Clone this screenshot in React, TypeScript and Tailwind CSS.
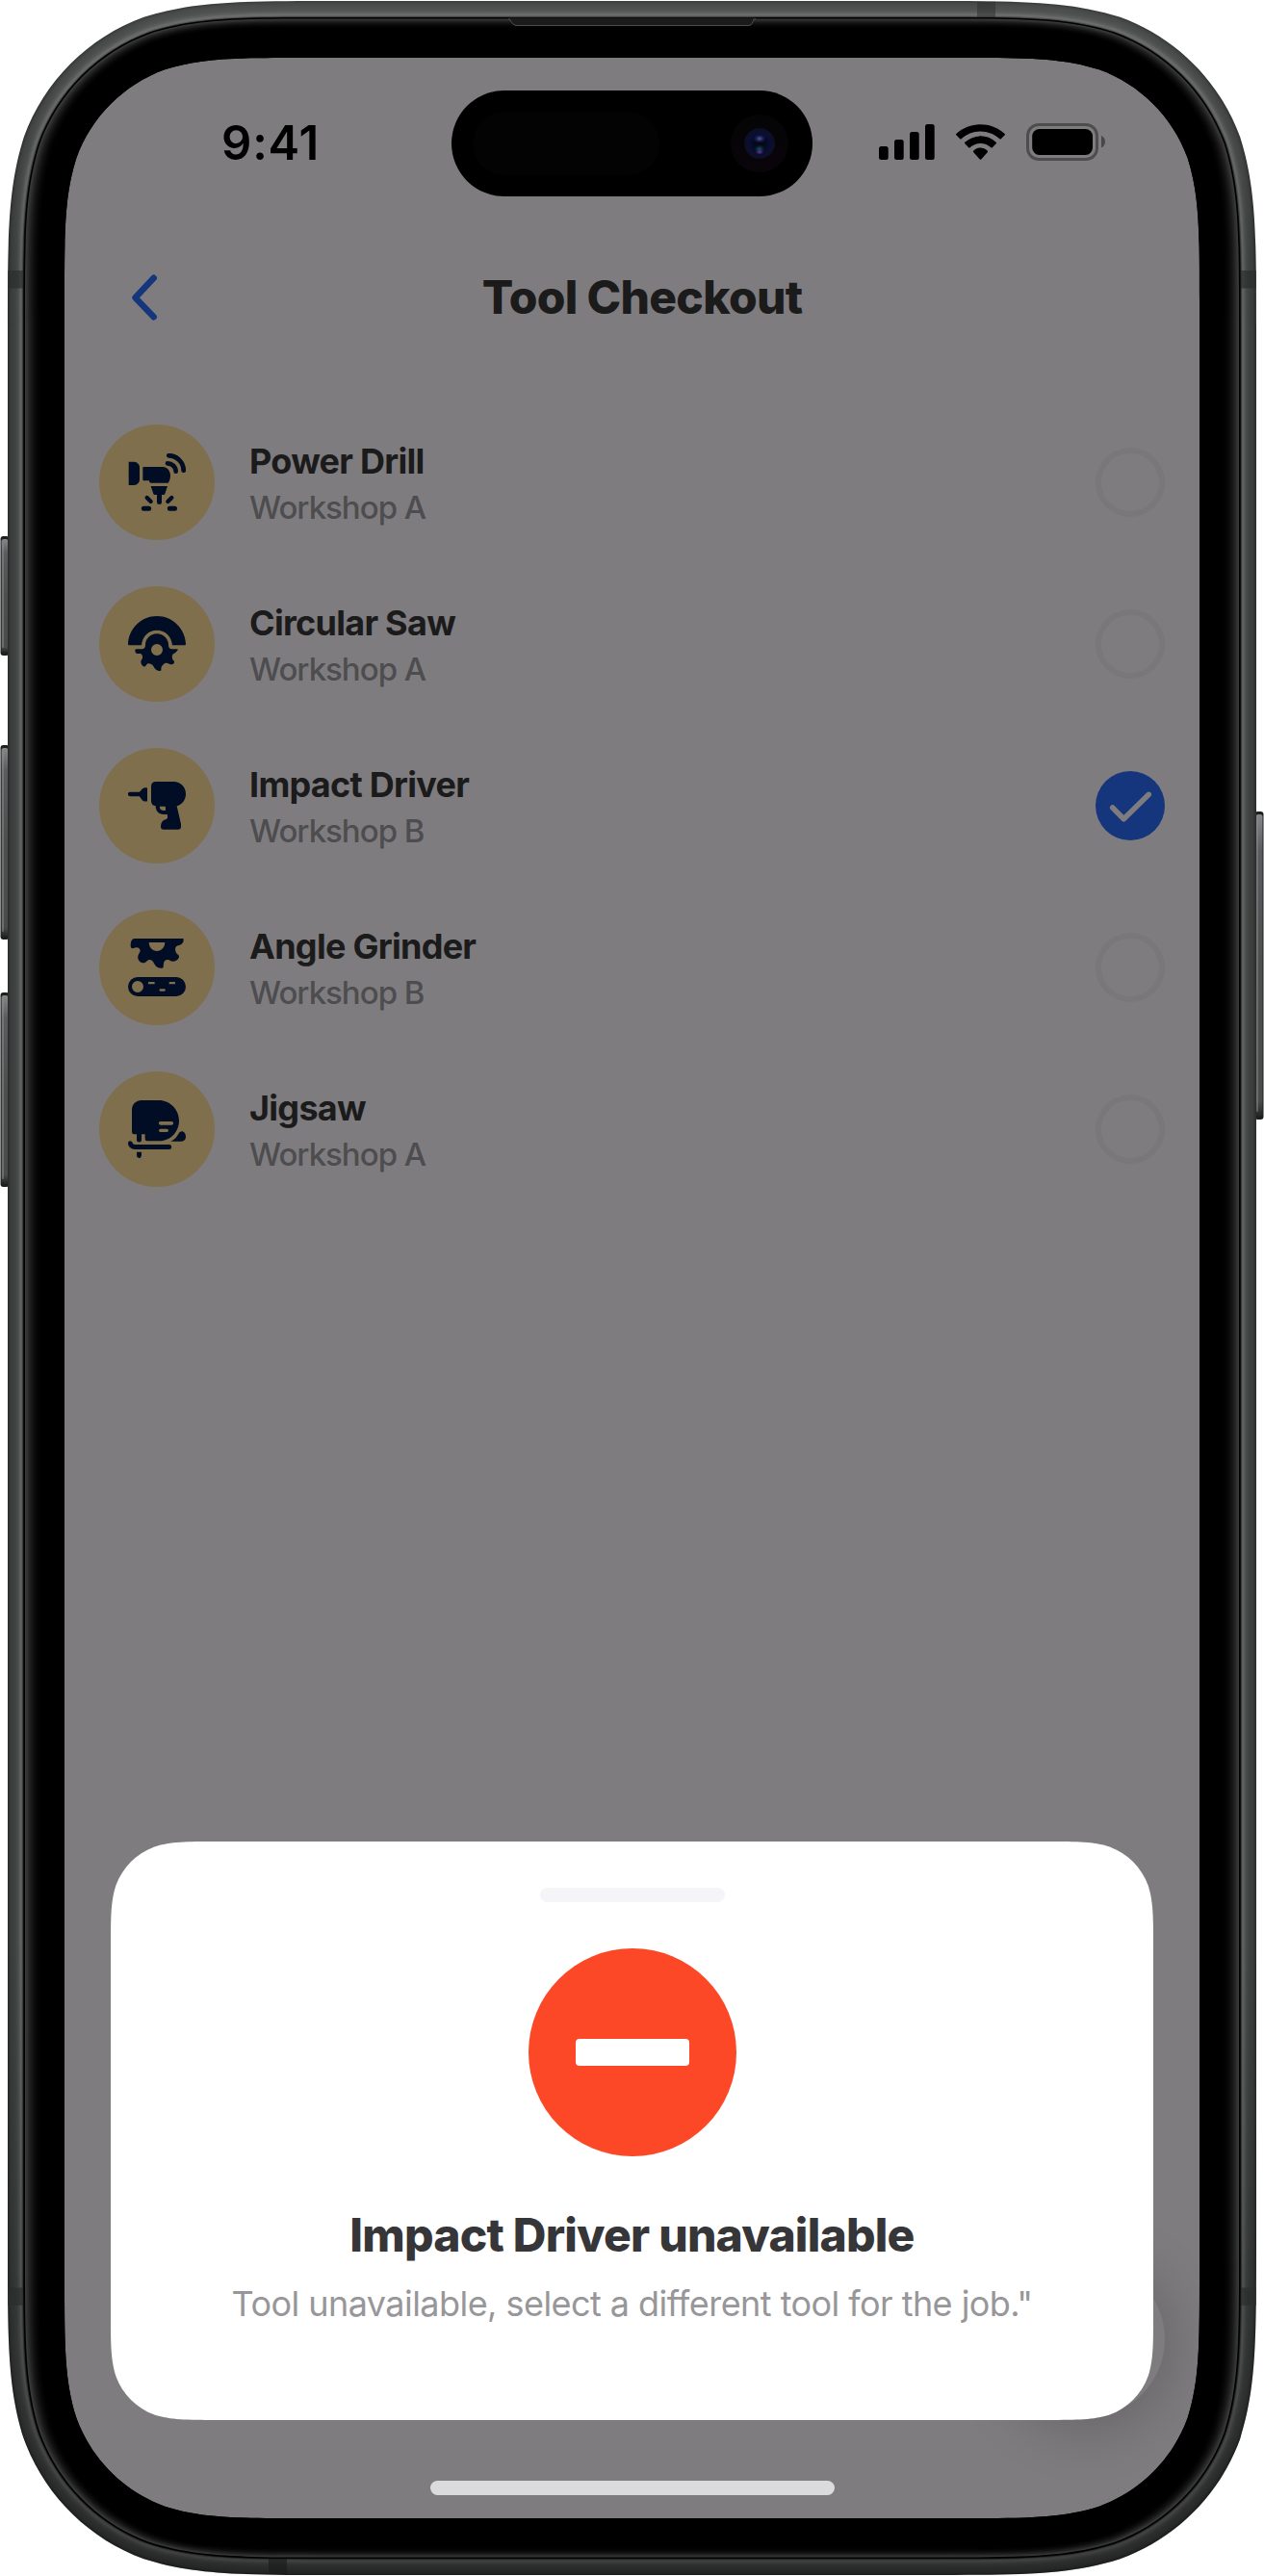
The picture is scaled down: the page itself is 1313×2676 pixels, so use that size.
import type { ReactNode } from "react";

/* Rounded rectangle with continuous (superellipse-like) corners. */
function squircle(x: number, y: number, w: number, h: number, r: number): string {
  const a = 1.52866483 * r;
  const b = 1.08849296 * r;
  const c = 0.86840694 * r;
  const d = 0.63149379 * r;
  const e = 0.37282383 * r;
  const f = 0.16905956 * r;
  const g = 0.07491139 * r;
  const R = x + w;
  const B = y + h;
  return [
    `M${x + a} ${y}H${R - a}`,
    `C${R - b} ${y} ${R - c} ${y} ${R - d} ${y + g}`,
    `C${R - e} ${y + f} ${R - f} ${y + e} ${R - g} ${y + d}`,
    `C${R} ${y + c} ${R} ${y + b} ${R} ${y + a}V${B - a}`,
    `C${R} ${B - b} ${R} ${B - c} ${R - g} ${B - d}`,
    `C${R - f} ${B - e} ${R - e} ${B - f} ${R - d} ${B - g}`,
    `C${R - c} ${B} ${R - b} ${B} ${R - a} ${B}H${x + a}`,
    `C${x + b} ${B} ${x + c} ${B} ${x + d} ${B - g}`,
    `C${x + e} ${B - f} ${x + f} ${B - e} ${x + g} ${B - d}`,
    `C${x} ${B - c} ${x} ${B - b} ${x} ${B - a}V${y + a}`,
    `C${x} ${y + b} ${x} ${y + c} ${x + g} ${y + d}`,
    `C${x + f} ${y + e} ${x + e} ${y + f} ${x + d} ${y + g}`,
    `C${x + c} ${y} ${x + b} ${y} ${x + a} ${y}Z`,
  ].join("");
}

const METAL = [44, 50, 56, 59, 61, 63, 64, 66, 68, 71, 76, 82, 90, 98, 92, 60, 28];
const GLOW = [58, 53, 47, 41, 35, 30, 25, 21, 17, 14, 11, 8, 6, 4, 3, 2];
/* The screen opening, and a slightly larger one that keeps the rim layers clear of its edge. */
const HOLE = squircle(67, 60, 1179, 2556, 165);
const RIM_HOLE = squircle(55, 50, 1203, 2576, 175);

function SideButton({ x, y, h }: { x: number; y: number; h: number }) {
  return (
    <g>
      <rect x={x} y={y} width="9" height={h} rx="3" fill="#1d1f1f" />
      <rect x={x + 1} y={y + 3} width="7" height={h - 6} rx="2.5" fill="url(#button)" />
      <rect x={x + 1.5} y={y + 6} width="2" height={h - 14} rx="1" fill="#8b8d8f" opacity="0.5" />
    </g>
  );
}

function Bezel() {
  return (
    <svg className="pointer-events-none absolute inset-0" width="1313" height="2676" viewBox="0 0 1313 2676">
      <defs>
        <linearGradient id="button" x1="0" y1="0" x2="0" y2="1">
          <stop offset="0" stopColor="#85878a" />
          <stop offset="0.12" stopColor="#5a5c5e" />
          <stop offset="0.5" stopColor="#4c4f4e" />
          <stop offset="0.95" stopColor="#4a4c4c" />
          <stop offset="1" stopColor="#222323" />
        </linearGradient>
        <linearGradient id="shade" x1="0" y1="0" x2="0" y2="1">
          <stop offset="0" stopColor="#fff" stopOpacity="0.08" />
          <stop offset="0.1" stopColor="#fff" stopOpacity="0" />
          <stop offset="0.75" stopColor="#000" stopOpacity="0" />
          <stop offset="1" stopColor="#000" stopOpacity="0.35" />
        </linearGradient>
      </defs>
      <SideButton x={0.5} y={557} h={124} />
      <SideButton x={0.5} y={774} h={202} />
      <SideButton x={0.5} y={1031} h={202} />
      <SideButton x={1303.5} y={843} h={320} />
      {METAL.map((v, i) => (
        <path
          key={i}
          fillRule="evenodd"
          fill={`rgb(${v - 1},${v + 1},${v})`}
          d={squircle(8 + i, 1 + i * 1.05, 1297 - 2 * i, 2674 - 2.1 * i, 224 - i) + RIM_HOLE}
        />
      ))}
      <path fillRule="evenodd" fill="url(#shade)" d={squircle(8, 1, 1297, 2674, 224) + RIM_HOLE} />
      <g fill="#2b2d2c">
        <rect x="8" y="281" width="16" height="18.5" opacity="0.7" />
        <rect x="1289" y="281" width="16" height="18.5" opacity="0.7" />
        <rect x="8" y="2376.500" width="16" height="18.5" opacity="0.7" />
        <rect x="1289" y="2376.500" width="16" height="18.5" opacity="0.7" />
        <rect x="1015" y="1.500" width="19" height="17" opacity="0.5" />
      </g>
      <rect x="279" y="2658" width="19" height="16" fill="#1c1d1d" opacity="0.7" />
      <path fillRule="evenodd" fill="#000" d={squircle(24.5, 18, 1264, 2640, 207) + HOLE} />
      {GLOW.map((v, i) => (
        <path
          key={i}
          fillRule="evenodd"
          fill={`rgb(${v},${v},${v})`}
          d={squircle(26 + i, 19.5 + i * 0.6, 1261 - 2 * i, 2637 - 1.2 * i, 205.5 - i * 0.8) + RIM_HOLE}
        />
      ))}
      <path fillRule="evenodd" fill="#000" d={squircle(42, 29, 1229, 2618, 192) + HOLE} />
      <path d="M528 18.500Q530 18.500 531 22T536 27H778Q781 27 782 22T785 18.500Z" fill="#1b1b1b" />
      <path d="M528 19.500Q530 19.500 531 22.500T536 26.500H778Q781 26.500 782 22.500T785 19.500" fill="none" stroke="#4b4b4b" strokeWidth="1" />
    </svg>
  );
}

function DynamicIsland() {
  return (
    <div className="flex h-[110px] w-[375px] items-center justify-between rounded-full bg-black pr-[25px] pl-[22px]">
      <div className="h-[66px] w-[194px] rounded-full bg-[#030303]" />
      <svg width="60" height="60" viewBox="0 0 60 60">
        <defs>
          <linearGradient id="lensRim" x1="0" y1="0" x2="0" y2="1">
            <stop offset="0" stopColor="#040405" />
            <stop offset="1" stopColor="#0a040b" />
          </linearGradient>
          <radialGradient id="lens" cx="0.5" cy="0.5" r="0.5">
            <stop offset="0" stopColor="#05070f" />
            <stop offset="0.55" stopColor="#060a22" />
            <stop offset="1" stopColor="#0a0f3a" />
          </radialGradient>
          <radialGradient id="glintTop">
            <stop offset="0" stopColor="#5a5ca8" />
            <stop offset="1" stopColor="#15185a" stopOpacity="0" />
          </radialGradient>
          <radialGradient id="glintBottom">
            <stop offset="0" stopColor="#155a66" />
            <stop offset="1" stopColor="#0a2a40" stopOpacity="0" />
          </radialGradient>
          <radialGradient id="glintPink">
            <stop offset="0" stopColor="#7a2a90" />
            <stop offset="1" stopColor="#7a2a90" stopOpacity="0" />
          </radialGradient>
        </defs>
        <circle cx="30" cy="30" r="30" fill="url(#lensRim)" />
        <circle cx="30" cy="30" r="16" fill="#0d0f26" />
        <circle cx="30" cy="30" r="12.500" fill="url(#lens)" />
        <ellipse cx="30" cy="25" rx="7" ry="5" fill="url(#glintTop)" />
        <ellipse cx="30" cy="36" rx="6" ry="5" fill="url(#glintBottom)" />
        <ellipse cx="30" cy="39" rx="4" ry="2.500" fill="url(#glintPink)" />
      </svg>
    </div>
  );
}

function StatusBar() {
  return (
    <div className="flex h-[176px] shrink-0 items-center pr-[98px] pl-[163px]">
      <div className="text-[49px] leading-none font-semibold tracking-[0.8px] text-black">9:41</div>
      <div className="ml-auto flex items-center gap-[22px] pb-px">
        <svg width="58" height="39" viewBox="0 0 58 39">
          <rect x="0" y="24" width="9.700" height="14" rx="2.500" />
          <rect x="16" y="17" width="9.700" height="21" rx="2.500" />
          <rect x="32" y="9" width="9.700" height="29" rx="2.500" />
          <rect x="48" y="1" width="9.700" height="37" rx="2.500" />
        </svg>
        <svg width="51" height="39" viewBox="0 -0.33 17.14 13">
          <path d="M8.571 2.466C11.058 2.466 13.45 3.388 15.253 5.042C15.389 5.17 15.606 5.168 15.739 5.038L17.037 3.775C17.105 3.709 17.142 3.62 17.142 3.527C17.141 3.435 17.102 3.346 17.034 3.281C12.303 -1.094 4.839 -1.094 0.108 3.281C0.04 3.346 0.001 3.435 0 3.527C0 3.62 0.037 3.709 0.105 3.775L1.403 5.038C1.536 5.168 1.753 5.17 1.889 5.042C3.692 3.388 6.084 2.466 8.571 2.466ZM8.568 6.687C9.925 6.686 11.234 7.198 12.24 8.122C12.376 8.253 12.591 8.251 12.723 8.116L14.011 6.797C14.078 6.728 14.116 6.634 14.115 6.536C14.114 6.439 14.075 6.346 14.006 6.278C10.942 3.387 6.197 3.387 3.133 6.278C3.064 6.346 3.024 6.439 3.023 6.536C3.023 6.634 3.06 6.728 3.128 6.797L4.415 8.116C4.548 8.251 4.762 8.253 4.898 8.122C5.903 7.199 7.211 6.687 8.568 6.687ZM11.092 9.48C11.094 9.585 11.057 9.687 10.99 9.761L8.813 12.216C8.749 12.288 8.662 12.328 8.572 12.328C8.481 12.328 8.394 12.288 8.33 12.216L6.153 9.761C6.086 9.687 6.049 9.585 6.051 9.48C6.053 9.375 6.094 9.275 6.164 9.204C7.554 7.885 9.59 7.885 10.98 9.204C11.05 9.275 11.09 9.375 11.092 9.48Z" />
        </svg>
        <svg width="82" height="39" viewBox="0 0 82 39">
          <rect x="1.500" y="1.500" width="72" height="36" rx="11.500" fill="none" stroke="#000" strokeOpacity="0.38" strokeWidth="3" />
          <rect x="6.200" y="6" width="62.800" height="27" rx="7.500" />
          <path d="M78 13V25.500C80.500 24.400 82 22 82 19.250S80.500 14.100 78 13Z" fillOpacity="0.42" />
        </svg>
      </div>
    </div>
  );
}

function Header() {
  return (
    <div className="flex h-[145px] shrink-0 items-center pr-[77px] pl-[68px]">
      <svg width="30" height="50" viewBox="0 0 30 50" fill="none" stroke="#2a6cf8" strokeWidth="6.500" strokeLinecap="round" strokeLinejoin="round">
        <path d="M24.700 4.800L5.500 25.300L24.700 45.200" />
      </svg>
      <h1 className="flex-1 text-center text-[48px] leading-none font-extrabold tracking-[-0.7px] text-[#363639]">Tool Checkout</h1>
    </div>
  );
}

function Glyph({ viewBox, children }: { viewBox: string; children: ReactNode }) {
  return (
    <svg width="60" height="60" viewBox={viewBox} fill="#021a4a" fillRule="evenodd">
      {children}
    </svg>
  );
}

const DrillIcon = (
  <Glyph viewBox="129 153 180 180">
    <path d="M131 179H148C158 180 165 187 165 197V234C165 244 158 251 148 252H131Z" />
    <path d="M178 195H238C252 196 261 208 261 222C261 232 258 240 254 245H202C196 245 195 242 195 238H178Q175 238 175 235V198Q175 195 178 195Z" />
    <path d="M200 255H252L244 279Q243 282 240 282H212Q209 282 208 279Z" />
    <path d="M219 280H234V305Q234 312 226.500 312T219 305Z" />
    <g fill="none" stroke="#021a4a" strokeLinecap="round">
      <path d="M256 160C281 160 302 181 302 206" strokeWidth="14.500" />
      <path d="M252 184C266 184 278 195 278 209" strokeWidth="14" />
      <path d="M188 291L200 303M265 291L253 303" strokeWidth="13" />
      <path d="M178 325H194M259 325H274.500" strokeWidth="15" />
    </g>
  </Glyph>
);

const SawIcon = (
  <Glyph viewBox="129 657 180 180">
    <path d="M129 748C130 700 170 660 219 660S308 700 309 748Q309 751 306 751H267C265 724 246 704 219 704S173 724 171 751H132Q129 751 129 748Z" />
    <path d="M183 750C183 731 199 715 219 715S255 731 255 750C255 758 258 762 266 763H283Q286 763 284 766Q278 775 270 778C265 782 265 794 271 799Q274 801 273 805C271 811 266 811 261 811C250 805 244 805 240 810C234 815 232 818 232 828Q232 831 229 831C219 831 213 826 208 816C204 810 197 807 190 808L183 816Q180 819 177 817C170 812 169 806 169 801Q170 796 174 792C175 785 173 779 168 777H156C151 774 151 770 151 766Q151 763 154 763H172C180 762 183 758 183 750ZM219 747A18 18 0 1 0 219 783A18 18 0 1 0 219 747Z" />
  </Glyph>
);

const DriverIcon = (
  <Glyph viewBox="129 171 180 180">
    <path d="M135.500 218.500H164C169 216 171 207 180 204.500H187Q189 204.500 189 207V245Q189 247.500 187 247.500H180C171 245 169 236 164 232H135.500A6.700 6.700 0 0 1 135.500 218.500Z" />
    <path d="M216 186H271C293 186 309 203 309 224C309 242 298 257 281 262L294 318V326Q294 335 285 335H240Q231 335 231 326C231 314 236 307 246 304C252 303 254 297 251 288H240C224 288 215 278 215 262C206 261 201 255 201 247V201Q201 186 216 186ZM228 263V268Q230 276 240 276H244Q246 276 246 273V266Q246 263 243 263Z" />
  </Glyph>
);

const GrinderIcon = (
  <Glyph viewBox="129 675 180 180">
    <path d="M149 675H300Q303 675 302 679C302 689 296 694 288 696C277 698 275 704 277 714Q278 722 286 727Q289 729 288 733C285 743 276 747 268 746Q261 746 257 742C248 739 241 744 240 752L239 763Q239 767 235 767C224 768 214 762 210 752C204 740 195 739 189 744C183 751 178 752 171 750C160 745 159 736 160 730C161 723 167 719 167 712C166 704 159 702 154 703L143 706Q138 706 137 699C137 686 140 675 149 675ZM194 687C195 703 205 714 219 714S243 703 244 687Z" />
    <path d="M159 795H279A30 30 0 0 1 279 855H159A30 30 0 0 1 159 795ZM159 807A18 18 0 1 0 159 843A18 18 0 1 0 159 807ZM195 810A3.500 3.500 0 0 0 195 817H209A3.500 3.500 0 0 0 209 810ZM260 810A3.500 3.500 0 0 0 260 817H273A3.500 3.500 0 0 0 273 810ZM230 832A3.500 3.500 0 0 0 230 839H242A3.500 3.500 0 0 0 242 832Z" />
  </Glyph>
);

const JigsawIcon = (
  <Glyph viewBox="129 1179 180 180">
    <path d="M171 1179H225C260 1179 288 1208 288 1243C288 1278 260 1306 228 1306H189Q182 1306 182 1299V1285H171V1302A7.500 7.500 0 0 1 156 1302V1285H148Q141 1285 141 1278V1209C141 1192 154 1179 171 1179ZM230 1245A5.500 5.500 0 0 0 230 1256H265A5.500 5.500 0 0 0 265 1245ZM230 1268A5 5 0 0 0 230 1278H250A5 5 0 0 0 250 1268Z" />
    <path d="M262 1307C273 1302 281 1294 286 1284C289 1277 294 1275 299 1276C306 1279 309 1286 309 1294C308 1303 303 1307 296 1307Z" />
    <path d="M129 1312C129 1308 132 1306 137 1306Q142 1307 143 1312Q145 1317 150 1317H257A7.500 7.500 0 0 1 257 1332H151C138 1332 129 1324 129 1312Z" />
    <path d="M156 1340H171V1349Q170 1359 163 1359Q156 1358 156 1351Z" />
  </Glyph>
);

type Tool = { name: string; place: string; icon: ReactNode; selected?: boolean };

const TOOLS: Tool[] = [
  { name: "Power Drill", place: "Workshop A", icon: DrillIcon },
  { name: "Circular Saw", place: "Workshop A", icon: SawIcon },
  { name: "Impact Driver", place: "Workshop B", icon: DriverIcon, selected: true },
  { name: "Angle Grinder", place: "Workshop B", icon: GrinderIcon },
  { name: "Jigsaw", place: "Workshop A", icon: JigsawIcon },
];

function ToolRow({ name, place, icon, selected }: Tool) {
  return (
    <li className="flex h-[120px] items-center">
      <div className="flex size-[120px] shrink-0 items-center justify-center rounded-full bg-[#ffde9b]">{icon}</div>
      <div className="ml-9 flex-1">
        <div className="text-[36px] leading-[52px] font-bold tracking-[-0.72px] text-[#363639]">{name}</div>
        <div className="text-[33px] leading-[44px] font-medium tracking-[-1px] text-[#9b9a9e]">{place}</div>
      </div>
      {selected ? (
        <div className="size-[72px] rounded-full bg-[#2a6cf8]">
          <svg width="72" height="72" viewBox="0 0 72 72" fill="none" stroke="#fef9fe" strokeWidth="5.500" strokeLinecap="round" strokeLinejoin="round">
            <path d="M17.700 38L29.300 49.800L55.300 24.300" />
          </svg>
        </div>
      ) : (
        <div className="size-[72px] rounded-full border-[6px] border-[#f3eef3]" />
      )}
    </li>
  );
}

function UnavailableCard() {
  return (
    <div
      className="absolute right-12 bottom-[102px] left-12 flex h-[601px] flex-col items-center bg-white pt-12"
      style={{ clipPath: `path("${squircle(0, 0, 1083, 601, 72)}")` }}
    >
      <div className="h-[15px] w-[192px] shrink-0 rounded-full bg-[#f5f5f8]" />
      <div className="mt-12 flex size-[216px] shrink-0 items-center justify-center rounded-full bg-[#fc4826]">
        <div className="h-7 w-[118px] rounded-[4px] bg-white" />
      </div>
      <h2 className="mt-[52px] text-[48px] leading-[59px] font-extrabold tracking-[-0.78px] text-[#363639]">Impact Driver unavailable</h2>
      <p className="mt-[18px] text-[36px] leading-[48px] tracking-[-0.55px] text-[#979699]">
        Tool unavailable, select a different tool for the job."
      </p>
    </div>
  );
}

export default function App() {
  return (
    <div className="relative h-[2676px] w-[1313px] overflow-hidden bg-white pt-[60px] pl-[67px] font-['Inter',sans-serif]">
      <main className="relative flex h-[2556px] w-[1179px] flex-col overflow-hidden rounded-[130px] bg-[#fef9fe]">
        <StatusBar />
        <Header />
        <ul className="flex flex-col gap-12 px-9 pt-[60px]">
          {TOOLS.map((tool) => (
            <ToolRow key={tool.name} {...tool} />
          ))}
        </ul>
        <div className="absolute right-9 bottom-[105px] size-[162px] rounded-full bg-[#fef9fe] shadow-[0_6px_72px_rgba(0,0,0,0.25)]" />
        <div className="absolute inset-0 bg-black/50" />
        <UnavailableCard />
        <div className="absolute bottom-6 left-[380px] h-[15px] w-[420px] rounded-full bg-[#dbdadd]" />
      </main>
      <Bezel />
      <div className="absolute top-[94px] left-[469px]">
        <DynamicIsland />
      </div>
    </div>
  );
}
